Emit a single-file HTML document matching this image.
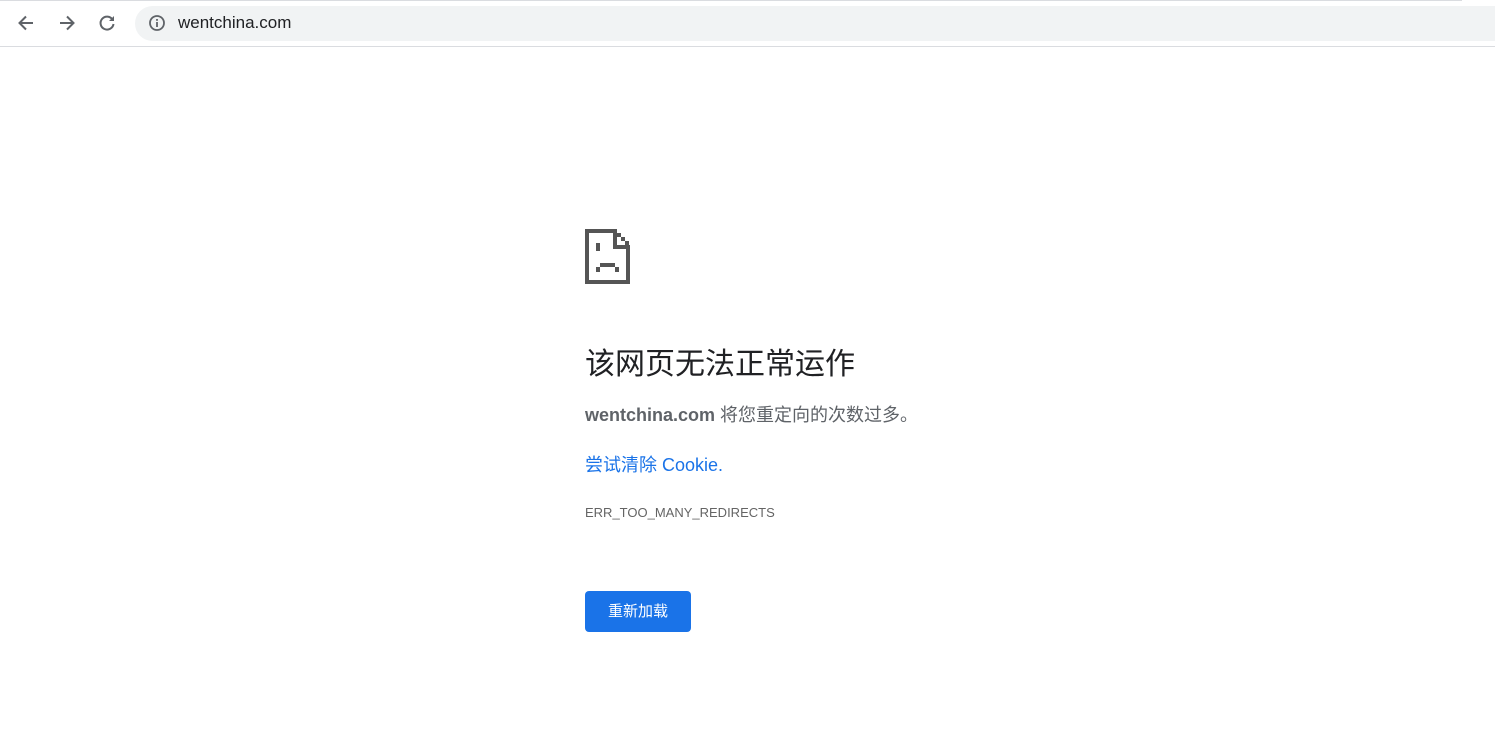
<!DOCTYPE html>
<html><head><meta charset="utf-8"><style>
*{margin:0;padding:0;box-sizing:border-box}
body{width:1495px;height:750px;background:#fff;position:relative;overflow:hidden;font-family:"Liberation Sans","Noto Sans CJK SC",sans-serif}
.bar{position:absolute;left:0;top:0;width:1495px;height:47px;background:#fff;border-bottom:1px solid #dadce0}
.pill{position:absolute;left:135px;top:6px;width:1380px;height:35px;background:#f1f3f4;border-radius:18px}
.url{position:absolute;left:178px;top:13px;font-size:17px;color:#202124}
.abs{position:absolute;white-space:nowrap}
</style></head><body>
<div class="bar">
<div class="abs" style="left:0;top:0;width:1462px;height:1px;background:#dadce0"></div>
<svg class="abs" style="left:16px;top:13px" width="20" height="20" viewBox="0 0 20 20"><path d="M17 10H4M10 3.5L3.5 10 10 16.5" stroke="#5f6368" stroke-width="2" fill="none"/></svg>
<svg class="abs" style="left:57px;top:13px" width="20" height="20" viewBox="0 0 20 20"><path d="M3 10h13M10 3.5L16.5 10 10 16.5" stroke="#5f6368" stroke-width="2" fill="none"/></svg>
<svg class="abs" style="left:97px;top:13px" width="20" height="20" viewBox="0 0 20 20"><path d="M15.5 6.5A6.5 6.5 0 1 0 16.5 11" stroke="#5f6368" stroke-width="2" fill="none"/><path d="M17 3v5h-5z" fill="#5f6368"/></svg>
<div class="pill"></div>
<svg class="abs" style="left:148px;top:14px" width="18" height="18" viewBox="0 0 18 18"><circle cx="9" cy="9" r="7" stroke="#5f6368" stroke-width="1.8" fill="none"/><rect x="8.1" y="8" width="1.8" height="5" fill="#5f6368"/><rect x="8.1" y="5" width="1.8" height="1.8" fill="#5f6368"/></svg>
<div class="url">wentchina.com</div>
</div>
<svg class="abs" style="left:585px;top:229px" width="45" height="55" viewBox="0 0 45 55" fill="#555">
<rect x="0" y="0" width="28" height="4"/><rect x="0" y="0" width="4" height="55"/><rect x="0" y="51" width="45" height="4"/><rect x="41" y="16" width="4" height="39"/>
<rect x="28" y="0" width="4" height="20"/><rect x="28" y="16" width="17" height="4"/>
<rect x="32" y="4" width="4" height="4"/><rect x="36" y="8" width="4" height="4"/><rect x="40" y="12" width="4" height="4"/>
<rect x="11" y="14" width="4" height="8"/>
<rect x="15" y="34" width="15" height="4"/><rect x="11" y="38" width="4" height="5"/><rect x="30" y="38" width="4" height="5"/>
</svg>
<div class="abs" style="left:585px;top:339px;font-size:30px;color:#202124">该网页无法正常运作</div>
<div class="abs" style="left:585px;top:401px;font-size:18px;color:#5f6368"><b>wentchina.com</b> 将您重定向的次数过多。</div>
<div class="abs" style="left:585px;top:451px;font-size:18px;color:#1a73e8">尝试清除 Cookie.</div>
<div class="abs" style="left:585px;top:505px;font-size:13px;color:#646464">ERR_TOO_MANY_REDIRECTS</div>
<div class="abs" style="left:585px;top:591px;width:106px;height:41px;background:#1a73e8;border-radius:4px;color:#fff;font-size:15px;text-align:center;line-height:41px">重新加载</div>
</body></html>
